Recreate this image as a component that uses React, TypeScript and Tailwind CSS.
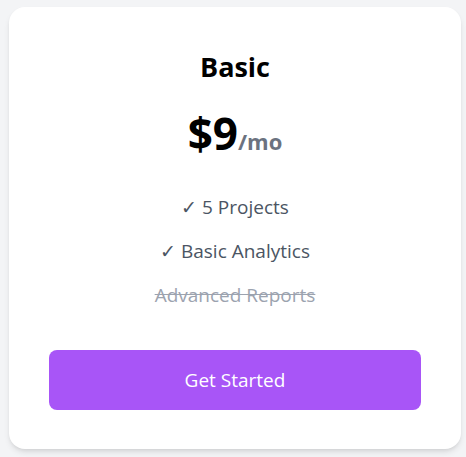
import React from "react";

const features = [
  { label: "✓ 5 Projects", included: true },
  { label: "✓ Basic Analytics", included: true },
  { label: "Advanced Reports", included: false },
];

const App: React.FC = () => {
  return (
    <div
      className="min-h-screen bg-[#f3f4f6] pl-[9px] pt-[7px]"
      style={{ fontFamily: '"Open Sans", "Noto Sans", sans-serif' }}
    >
      {/* Pricing card */}
      <div className="flex h-[442px] w-[452px] flex-col items-center rounded-2xl bg-white px-10 pt-[44px] shadow-md">
        <h2 className="text-[27px] font-bold leading-8 text-black">Basic</h2>
        <div className="mt-[26px] flex items-baseline">
          <span className="text-[44px] font-bold leading-[48px] text-black">$9</span>
          <span className="text-[22px] font-bold text-[#6b7280]">/mo</span>
        </div>
        <ul className="mt-[35px] flex flex-col items-center gap-4">
          {features.map((f) => (
            <li
              key={f.label}
              className={
                f.included
                  ? "text-[19px] leading-7 text-[#4b5563]"
                  : "text-[19px] leading-7 text-[#9ca3af] line-through"
              }
            >
              {f.label}
            </li>
          ))}
        </ul>
        <button className="mt-[41px] h-[60px] w-full rounded-lg bg-[#a855f7] text-[19px] text-white">
          Get Started
        </button>
      </div>
    </div>
  );
};

export default App;
